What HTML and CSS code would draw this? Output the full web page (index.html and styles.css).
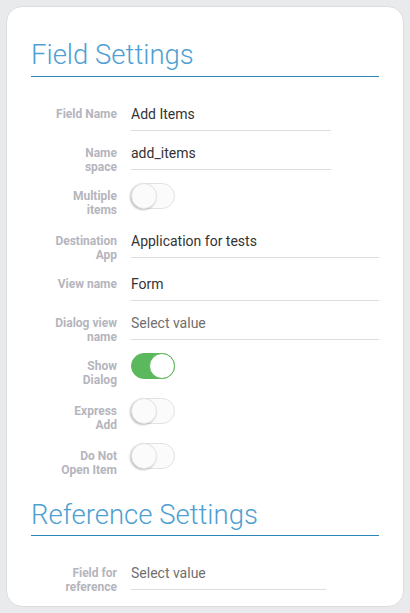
FILE: index.html
```html
<!DOCTYPE html>
<html>
<head>
    <title>Field Settings</title>
    <link rel="stylesheet" href="styles.css">
</head>
<body>
    <div class="card">
        <h2 class="section-title">Field Settings</h2>

        <div class="row">
            <label class="row-label">Field Name</label>
            <div class="field short">Add Items</div>
        </div>
        <div class="row">
            <label class="row-label">Name<br>space</label>
            <div class="field short">add_items</div>
        </div>
        <div class="row toggle-row">
            <label class="row-label">Multiple<br>items</label>
            <span class="switch"></span>
        </div>
        <div class="row">
            <label class="row-label">Destination<br>App</label>
            <div class="field wide">Application for tests</div>
        </div>
        <div class="row">
            <label class="row-label">View name</label>
            <div class="field wide">Form</div>
        </div>
        <div class="row">
            <label class="row-label">Dialog view<br>name</label>
            <div class="field wide placeholder">Select value</div>
        </div>
        <div class="row toggle-row">
            <label class="row-label">Show<br>Dialog</label>
            <span class="switch on"></span>
        </div>
        <div class="row toggle-row">
            <label class="row-label">Express<br>Add</label>
            <span class="switch"></span>
        </div>
        <div class="row toggle-row">
            <label class="row-label">Do Not<br>Open Item</label>
            <span class="switch"></span>
        </div>

        <h2 class="section-title second">Reference Settings</h2>

        <div class="row">
            <label class="row-label">Field for<br>reference</label>
            <div class="field ref placeholder">Select value</div>
        </div>
    </div>
</body>
</html>
```

FILE: styles.css
```css
body {
    margin: 0;
    padding: 6px;
    background-color: #e9eaeb;
    font-family: Roboto, "Liberation Sans", sans-serif;
}

.card {
    width: 348px;
    height: 567px;
    padding: 32px 24px 0 24px;
    background-color: #ffffff;
    border: 1px solid #dcdddf;
    border-radius: 16px;
}

.section-title {
    margin: 0 0 21px 0;
    padding-bottom: 5px;
    font-size: 27.5px;
    line-height: 32px;
    font-weight: 300;
    color: #4f9fd2;
    border-bottom: 1px solid #2b86b6;
}

.section-title.second {
    margin-top: 20px;
    padding-bottom: 4px;
}

.row {
    display: flex;
    align-items: flex-start;
    gap: 14px;
    margin-bottom: 6px;
}

.toggle-row {
    padding-bottom: 2px;
}

.row-label {
    width: 86px;
    padding-top: 9px;
    font-size: 12px;
    line-height: 14px;
    font-weight: 700;
    color: #b5b5bd;
    text-align: right;
}

.field {
    padding: 6px 0;
    font-size: 14px;
    line-height: 20px;
    color: #333333;
    border-bottom: 1px solid #dddddd;
}

.field.short {
    width: 200px;
}

.field.wide {
    width: 248px;
}

.field.ref {
    width: 195px;
}

.placeholder {
    color: #6f6f6f;
}

.switch {
    position: relative;
    display: block;
    box-sizing: border-box;
    width: 44px;
    height: 26px;
    margin-top: 3px;
    border: 1px solid #e2e2e2;
    border-radius: 13px;
    background-color: #fbfbfc;
}

/* knob */
.switch::after {
    content: "";
    position: absolute;
    top: -1px;
    left: -1px;
    box-sizing: border-box;
    width: 26px;
    height: 26px;
    border-radius: 50%;
    border: 1px solid #e4e4e4;
    background-color: #fbfbfc;
    box-shadow: -1px 1px 2px rgba(0, 0, 0, 0.25);
}

.switch.on {
    background-color: #5cb85c;
    border-color: #5cb85c;
}

.switch.on::after {
    left: auto;
    right: -1px;
    background-color: #ffffff;
    border-color: #5cb85c;
    box-shadow: none;
}
```
